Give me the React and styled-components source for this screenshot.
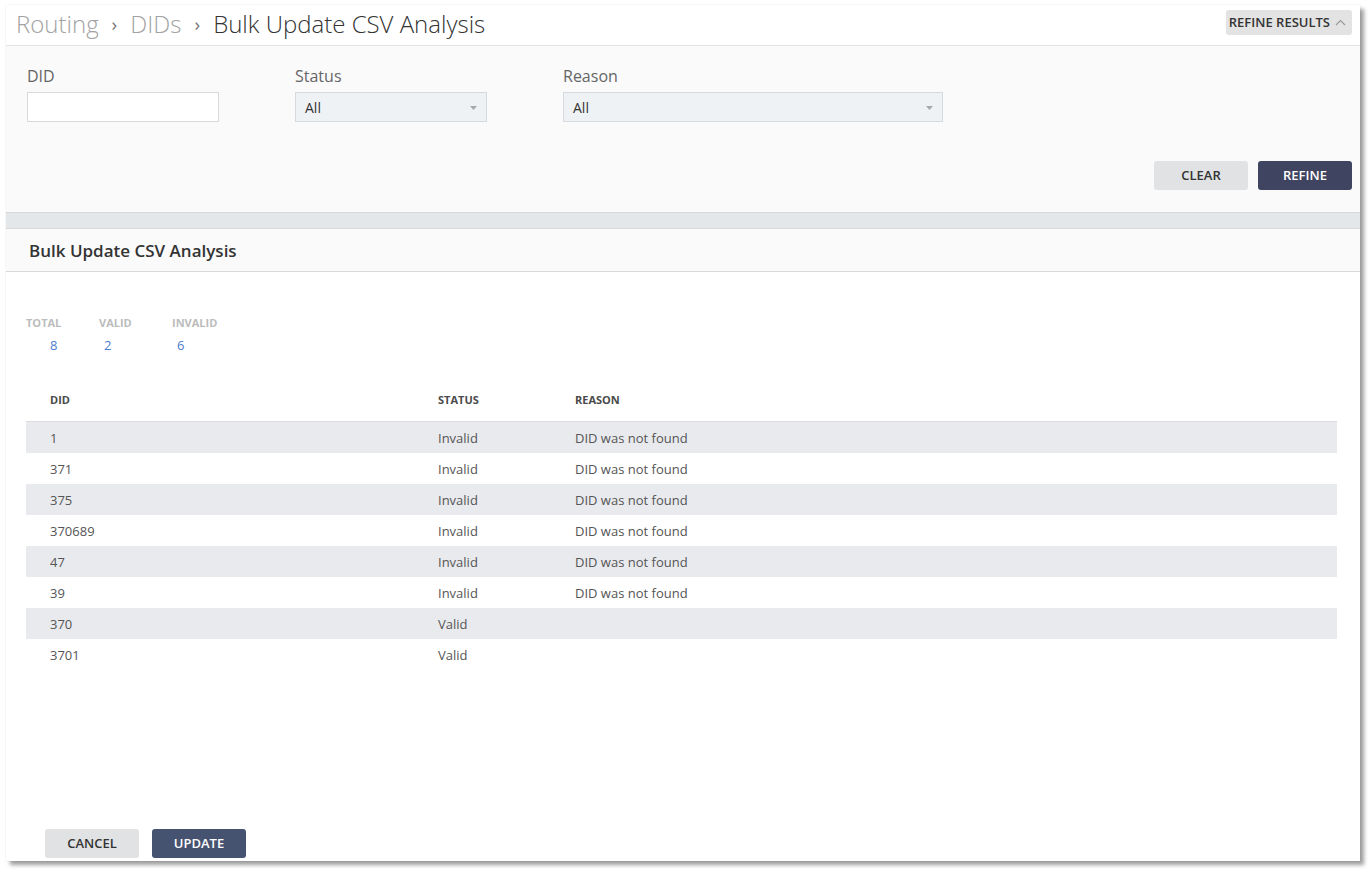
import styled, { createGlobalStyle } from 'styled-components';

const rows = [
    { did: '1', status: 'Invalid', reason: 'DID was not found' },
    { did: '371', status: 'Invalid', reason: 'DID was not found' },
    { did: '375', status: 'Invalid', reason: 'DID was not found' },
    { did: '370689', status: 'Invalid', reason: 'DID was not found' },
    { did: '47', status: 'Invalid', reason: 'DID was not found' },
    { did: '39', status: 'Invalid', reason: 'DID was not found' },
    { did: '370', status: 'Valid', reason: '' },
    { did: '3701', status: 'Valid', reason: '' },
];

const stats = [
    { label: 'Total', value: 8, indent: 24 },
    { label: 'Valid', value: 2, indent: 5 },
    { label: 'Invalid', value: 6, indent: 5 },
];

const Caret = () => (
    <svg width="9" height="6" viewBox="0 0 9 6">
        <polygon points="1,1 8,1 4.5,5" fill="#a8a8a8" />
    </svg>
);

const ChevronUp = () => (
    <svg width="11" height="7" viewBox="0 0 11 7">
        <polyline points="1,6 5.5,1.5 10,6" fill="none" stroke="#9a9a9a" strokeWidth="1.2" />
    </svg>
);

const App = () => {
    return (
        <>
            <GlobalStyle />
            <Page>
                <Window>
                    <Header>
                        <Crumbs>
                            <Crumb>Routing</Crumb>
                            <Sep>›</Sep>
                            <Crumb>DIDs</Crumb>
                            <Sep>›</Sep>
                            <Crumb current>Bulk Update CSV Analysis</Crumb>
                        </Crumbs>
                        <ToggleBtn>
                            REFINE RESULTS
                            <ChevronUp />
                        </ToggleBtn>
                    </Header>

                    <FilterPanel>
                        <Fields>
                            <Field width={192}>
                                <Label>DID</Label>
                                <TextInput />
                            </Field>
                            <Field width={192}>
                                <Label>Status</Label>
                                <Select>
                                    All
                                    <Caret />
                                </Select>
                            </Field>
                            <Field width={380}>
                                <Label>Reason</Label>
                                <Select>
                                    All
                                    <Caret />
                                </Select>
                            </Field>
                        </Fields>
                        <Actions>
                            <Button>CLEAR</Button>
                            <Button primary>REFINE</Button>
                        </Actions>
                    </FilterPanel>

                    <Band />

                    <SectionHead>Bulk Update CSV Analysis</SectionHead>

                    <Body>
                        <Stats>
                            {stats.map(s => (
                                <Stat key={s.label}>
                                    <StatLabel>{s.label}</StatLabel>
                                    <StatValue indent={s.indent}>{s.value}</StatValue>
                                </Stat>
                            ))}
                        </Stats>

                        <Table>
                            <HeadRow>
                                <HeadCell>DID</HeadCell>
                                <HeadCell>Status</HeadCell>
                                <HeadCell>Reason</HeadCell>
                            </HeadRow>
                            {rows.map((r, i) => (
                                <Row key={i} striped={i % 2 === 0}>
                                    <Cell>{r.did}</Cell>
                                    <Cell>{r.status}</Cell>
                                    <Cell>{r.reason}</Cell>
                                </Row>
                            ))}
                        </Table>

                        <Footer>
                            <Button>CANCEL</Button>
                            <Button update>UPDATE</Button>
                        </Footer>
                    </Body>
                </Window>
            </Page>
        </>
    );
};

export default App;

const GlobalStyle = createGlobalStyle`
    body {
        margin: 0;
        background: #fff;
        font-family: "Open Sans", "Liberation Sans", sans-serif;
    }
`;

const Page = styled.div`
    padding: 5px 0 0 6px;
    width: 1371px;
    height: 873px;
    box-sizing: border-box;
`;

const Window = styled.div`
    width: 1354px;
    height: 856px;
    background: #fff;
    display: flex;
    flex-direction: column;
    box-shadow: 0 0 1px rgba(0, 0, 0, 0.18), 4px 4px 4px rgba(0, 0, 0, 0.38);
    overflow: hidden;
`;

const Header = styled.div`
    height: 40px;
    display: flex;
    align-items: center;
    justify-content: space-between;
    padding: 0 8px 0 10px;
    border-bottom: 1px solid #e2e2e2;
    background: #fff;
`;

const Crumbs = styled.div`
    display: flex;
    align-items: center;
    gap: 13px;
    margin-top: -4px;
`;

const Crumb = styled.span`
    font-size: 24px;
    font-weight: 300;
    color: ${p => (p.current ? '#333' : '#a2a2a2')};
`;

const Sep = styled.span`
    font-size: 19px;
    color: #777;
    margin-top: 1px;
`;

const ToggleBtn = styled.button`
    height: 25px;
    margin-top: -6px;
    display: flex;
    align-items: center;
    gap: 5px;
    padding: 0 6px 0 3px;
    border: none;
    border-radius: 3px;
    background: #e3e3e3;
    font-family: inherit;
    font-size: 13px;
    font-weight: 600;
    color: #333;
`;

const FilterPanel = styled.div`
    height: 166px;
    box-sizing: border-box;
    background: #fafafa;
    padding: 20px 8px 0 21px;
    display: flex;
    flex-direction: column;
`;

const Fields = styled.div`
    display: flex;
    gap: 76px;
`;

const Field = styled.div`
    width: ${p => p.width}px;
    display: flex;
    flex-direction: column;
`;

const Label = styled.label`
    font-size: 16px;
    line-height: 20px;
    color: #666;
    margin-bottom: 6px;
`;

const TextInput = styled.div`
    height: 30px;
    box-sizing: border-box;
    background: #fff;
    border: 1px solid #d9d9d9;
`;

const Select = styled.div`
    height: 30px;
    box-sizing: border-box;
    background: #eff2f5;
    border: 1px solid #d6d9dd;
    display: flex;
    align-items: center;
    justify-content: space-between;
    padding: 1px 8px 0 9px;
    font-size: 14px;
    color: #333;
`;

const Actions = styled.div`
    display: flex;
    justify-content: flex-end;
    gap: 10px;
    margin-top: 39px;
`;

const Button = styled.button`
    width: 94px;
    height: 29px;
    padding: 0 0 2px;
    border: none;
    border-radius: 3px;
    font-family: inherit;
    font-size: 13px;
    font-weight: 600;
    background: ${p => (p.primary ? '#3f4560' : p.update ? '#465370' : '#e0e2e3')};
    color: ${p => (p.primary || p.update ? '#fff' : '#333')};
`;

const Band = styled.div`
    height: 15px;
    background: #e4e7ea;
    border-top: 1px solid #d6d6d6;
    border-bottom: 1px solid #d9d9d9;
`;

const SectionHead = styled.div`
    height: 42px;
    background: #fafafa;
    border-bottom: 1px solid #dadada;
    display: flex;
    align-items: center;
    padding-left: 23px;
    font-size: 17px;
    font-weight: 600;
    color: #333;
`;

const Body = styled.div`
    flex: 1;
    display: flex;
    flex-direction: column;
    padding: 0 23px 3px 20px;
`;

const Stats = styled.div`
    display: flex;
    margin-top: 43px;
`;

const Stat = styled.div`
    width: 73px;
    display: flex;
    flex-direction: column;
`;

const StatLabel = styled.div`
    font-size: 11px;
    font-weight: 700;
    text-transform: uppercase;
    color: #bcbcbc;
    line-height: 16px;
`;

const StatValue = styled.div`
    font-size: 13px;
    color: #4a7ecf;
    line-height: 18px;
    margin-top: 5px;
    padding-left: ${p => p.indent}px;
`;

const Table = styled.div`
    margin-top: 22px;
    display: flex;
    flex-direction: column;
`;

const HeadRow = styled.div`
    display: grid;
    grid-template-columns: 388px 137px 1fr;
    height: 46px;
    align-items: center;
    padding: 2px 0 0 24px;
    box-sizing: border-box;
    border-bottom: 1px solid #dcdcdc;
`;

const HeadCell = styled.div`
    font-size: 11px;
    font-weight: 700;
    text-transform: uppercase;
    color: #4a4a4a;
`;

const Row = styled.div`
    display: grid;
    grid-template-columns: 388px 137px 1fr;
    height: 31px;
    align-items: center;
    padding-left: 24px;
    background: ${p => (p.striped ? '#e9eaee' : '#fff')};
`;

const Cell = styled.div`
    font-size: 13px;
    color: #555;
`;

const Footer = styled.div`
    margin-top: auto;
    display: flex;
    gap: 13px;
    padding-left: 19px;
`;
